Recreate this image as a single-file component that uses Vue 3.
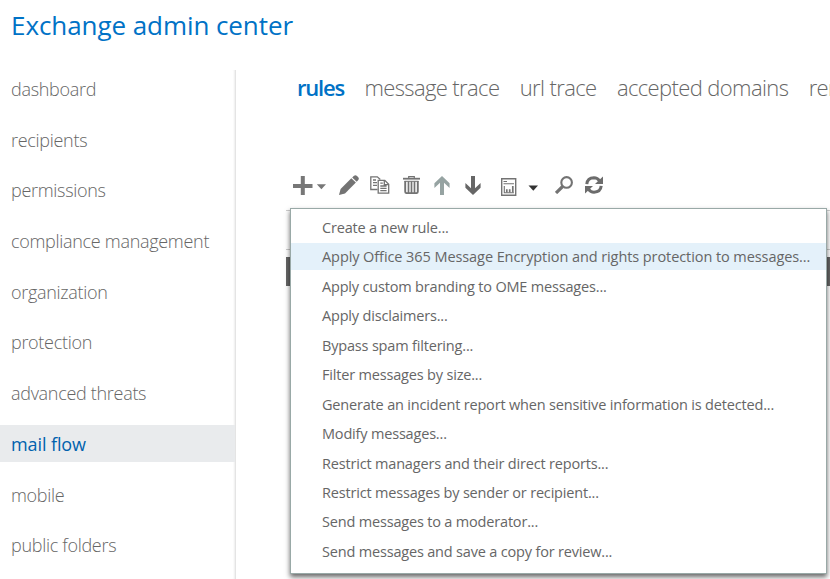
<template>
  <div class="page">
    <header class="header">
      <h1>Exchange admin center</h1>
    </header>
    <div class="body">
      <nav class="sidebar">
        <a
          v-for="item in navItems"
          :key="item"
          class="nav-item"
          :class="{ active: item === activeNav }"
          @click="activeNav = item"
        ><span>{{ item }}</span></a>
      </nav>
      <main class="content">
        <div class="tabs">
          <a
            v-for="tab in tabs"
            :key="tab"
            class="tab"
            :class="{ active: tab === activeTab }"
            @click="activeTab = tab"
          >{{ tab }}</a>
        </div>
        <div class="toolbar">
          <button class="tool add" aria-label="New" @click="menuOpen = !menuOpen">
            <svg width="33" height="20" viewBox="0 0 33 20">
              <path d="M0 9h7.800V1h4v8h7.700v3.900h-7.700V20h-4v-7.100H0z" fill="#777" />
              <path d="M23.800 9.300h9.200l-4.600 5z" fill="#777" />
            </svg>
          </button>
          <button class="tool edit" aria-label="Edit">
            <svg width="20" height="20" viewBox="0 0 20 20" fill="#737373">
              <path d="M0 20l1.600-6L12.300 3.200l4.600 4.400L6 18.400z" />
              <path d="M13.200 2.500L15 .8Q16.500-.4 18 .9l1 1Q20.500 3.500 19.300 4.900l-1.600 1.900z" />
            </svg>
          </button>
          <button class="tool copy" aria-label="Copy">
            <svg width="20" height="18" viewBox="0 0 20 18" fill="none" stroke="#737373" stroke-width="1.300">
              <path d="M7.500 13.500H.8V.8h6.500l3 2.800" />
              <path d="M3 4h3M3 6.700h4M3 9.400h4" />
              <path d="M8.200 4.400h6.600l3.900 3.900v8.900H8.200z" fill="#fff" />
              <path d="M14.300 4.500v4.200h4.300M10.300 7.200h2.500M10.300 10h6.300M10.300 12.300h6.300M10.300 14.700h6.300" />
            </svg>
          </button>
          <button class="tool trash" aria-label="Delete">
            <svg width="17" height="18" viewBox="0 0 17 18" fill="none" stroke="#737373">
              <path d="M0 2.700h17" stroke-width="1.800" />
              <path d="M5.700 2V.6h5.600V2" stroke-width="1.200" />
              <path d="M2.200 5v10.500q0 1.600 1.500 1.600h9.600q1.500 0 1.500-1.600V5" stroke-width="1.900" />
              <path d="M5.500 5.300v12M8.500 5.300v12M11.500 5.300v12" stroke-width="1.700" />
              <path d="M1.500 5.300h14" stroke-width="1" />
            </svg>
          </button>
          <button class="tool up" aria-label="Move up">
            <svg width="16" height="19" viewBox="0 0 16 19">
              <path d="M8 0l7.600 7.300v4.700L10 6.800V19H6V6.800L.4 12V7.300z" fill="#96a3a2" />
            </svg>
          </button>
          <button class="tool down" aria-label="Move down">
            <svg width="16" height="19" viewBox="0 0 16 19">
              <path d="M8 19L.4 11.700V7L6 12.200V0h4v12.200L15.600 7v4.700z" fill="#666" />
            </svg>
          </button>
          <button class="tool report" aria-label="Reports">
            <svg width="37" height="18" viewBox="0 0 37 18">
              <path d="M.7.700h14v16.600H.7z" fill="none" stroke="#737373" stroke-width="1.400" />
              <path d="M2.500 3.500h3.500M2.500 5.800h10.500" stroke="#737373" stroke-width="1.100" />
              <path d="M3.300 8v6.700h9.600" fill="none" stroke="#737373" stroke-width="1.100" />
              <path d="M5.800 14.500V11.300M8.700 14.500v-3.200M11.800 14.500V8" stroke="#737373" stroke-width="1.700" />
              <path d="M27.500 7.500H37l-4.700 5.200z" fill="#333" />
            </svg>
          </button>
          <button class="tool search" aria-label="Search">
            <svg width="18" height="18" viewBox="0 0 18 18" fill="none" stroke="#737373">
              <circle cx="11.600" cy="6.400" r="5.300" stroke-width="2.100" />
              <path d="M7.600 10.500L1 17" stroke-width="3.200" />
            </svg>
          </button>
          <button class="tool refresh" aria-label="Refresh">
            <svg width="18" height="18" viewBox="0 0 18 18">
              <g fill="none" stroke="#6c6c6c" stroke-width="3">
                <path d="M1.800 8.100Q2.400 2 9 1.800q3.500 0 5.300 3" />
                <path d="M16.200 9.900Q15.600 16 9 16.200q-3.500 0-5.300-3" />
              </g>
              <path d="M18 .5v7.600H10z" fill="#6c6c6c" />
              <path d="M0 17.500V9.900h8z" fill="#6c6c6c" />
            </svg>
          </button>
        </div>
        <div class="grid">
          <div class="grid-head"></div>
          <div class="grid-row"></div>
          <ul v-if="menuOpen" class="menu">
            <li
              v-for="(entry, i) in menuItems"
              :key="entry"
              :class="{ hover: i === hovered }"
              @mouseenter="hovered = i"
            ><span>{{ entry }}</span></li>
          </ul>
        </div>
      </main>
    </div>
  </div>
</template>

<script setup>
import { ref } from 'vue'

const navItems = [
  'dashboard',
  'recipients',
  'permissions',
  'compliance management',
  'organization',
  'protection',
  'advanced threats',
  'mail flow',
  'mobile',
  'public folders'
]

const tabs = ['rules', 'message trace', 'url trace', 'accepted domains', 'remote domains']

const menuItems = [
  'Create a new rule...',
  'Apply Office 365 Message Encryption and rights protection to messages...',
  'Apply custom branding to OME messages...',
  'Apply disclaimers...',
  'Bypass spam filtering...',
  'Filter messages by size...',
  'Generate an incident report when sensitive information is detected...',
  'Modify messages...',
  'Restrict managers and their direct reports...',
  'Restrict messages by sender or recipient...',
  'Send messages to a moderator...',
  'Send messages and save a copy for review...'
]

const activeNav = ref('mail flow')
const activeTab = ref('rules')
const menuOpen = ref(true)
const hovered = ref(1)
</script>

<style>
body {
  background: #fff;
  overflow: hidden;
}
</style>

<style scoped>
.page {
  display: flex;
  flex-direction: column;
  width: 100vw;
  height: 100vh;
  overflow: hidden;
  font-family: "Open Sans", "Noto Sans", sans-serif;
  color: #666;
}

.header {
  flex: none;
  height: 70px;
}

h1 {
  margin: 0;
  padding: 7px 0 0 11px;
  font-size: 26px;
  line-height: 36px;
  font-weight: 400;
  letter-spacing: -0.07px;
  color: #0072c6;
}

.body {
  display: flex;
  flex: 1;
  min-height: 0;
}

.sidebar {
  flex: none;
  display: flex;
  flex-direction: column;
  gap: 13.7px;
  box-sizing: border-box;
  width: 236px;
  border-right: 1px solid #e4e4e4;
  box-shadow: inset -2px 0 2px -1px #eee;
}

.nav-item {
  flex: none;
  height: 37px;
  padding-left: 11px;
  font-size: 18px;
  line-height: 38px;
  font-weight: 300;
  letter-spacing: -0.3px;
  cursor: pointer;
}

.nav-item.active {
  background: #e9ebed;
  color: #0062ae;
  font-weight: 400;
  letter-spacing: -0.1px;
}

.content {
  flex: 1;
  min-width: 0;
  display: flex;
  flex-direction: column;
}

.tabs {
  display: flex;
  gap: 20.400px;
  height: 36px;
  padding-left: 61px;
  font-size: 22px;
  line-height: 35px;
  font-weight: 300;
  white-space: nowrap;
  letter-spacing: -0.62px;
}

.tab {
  cursor: pointer;
}

.tab.active {
  color: #0072c6;
  font-weight: 550;
  letter-spacing: -1.2px;
}

.toolbar {
  display: flex;
  align-items: center;
  height: 20px;
  margin-top: 69px;
  padding-left: 57px;
}

.tool {
  display: flex;
  padding: 0;
  border: 0;
  background: none;
}

.edit {
  margin-left: 13px;
}

.copy {
  margin-left: 11px;
}

.trash {
  margin-left: 13px;
}

.up {
  margin-left: 14px;
}

.down {
  margin-left: 15px;
}

.report {
  margin: 3px 0 0 20px;
}

.search {
  margin-left: 17px;
}

.refresh {
  margin-left: 12px;
}

.grid {
  position: relative;
  margin: 15px 0 0 50px;
}

.grid-head {
  height: 38px;
  border-top: 1px solid #ccc;
  border-bottom: 1px solid #ccc;
}

.grid-row {
  height: 29px;
  margin-top: 7px;
  background: #666;
}

.menu {
  position: absolute;
  top: -2px;
  left: 4px;
  display: flex;
  flex-direction: column;
  gap: 2.450px;
  box-sizing: border-box;
  width: 537px;
  height: 366px;
  margin: 0;
  padding: 5px 0 0;
  border: 1px solid #99a9a7;
  background: #fff;
  box-shadow: 0 3px 5px rgba(0, 0, 0, 0.6);
  list-style: none;
}

.menu li {
  flex: none;
  height: 27px;
  padding-left: 31px;
  font-size: 14.500px;
  line-height: 28px;
  letter-spacing: -0.18px;
  white-space: nowrap;
  cursor: pointer;
}

.menu li.hover {
  background: #e4f1fa;
  letter-spacing: -0.08px;
}
</style>
